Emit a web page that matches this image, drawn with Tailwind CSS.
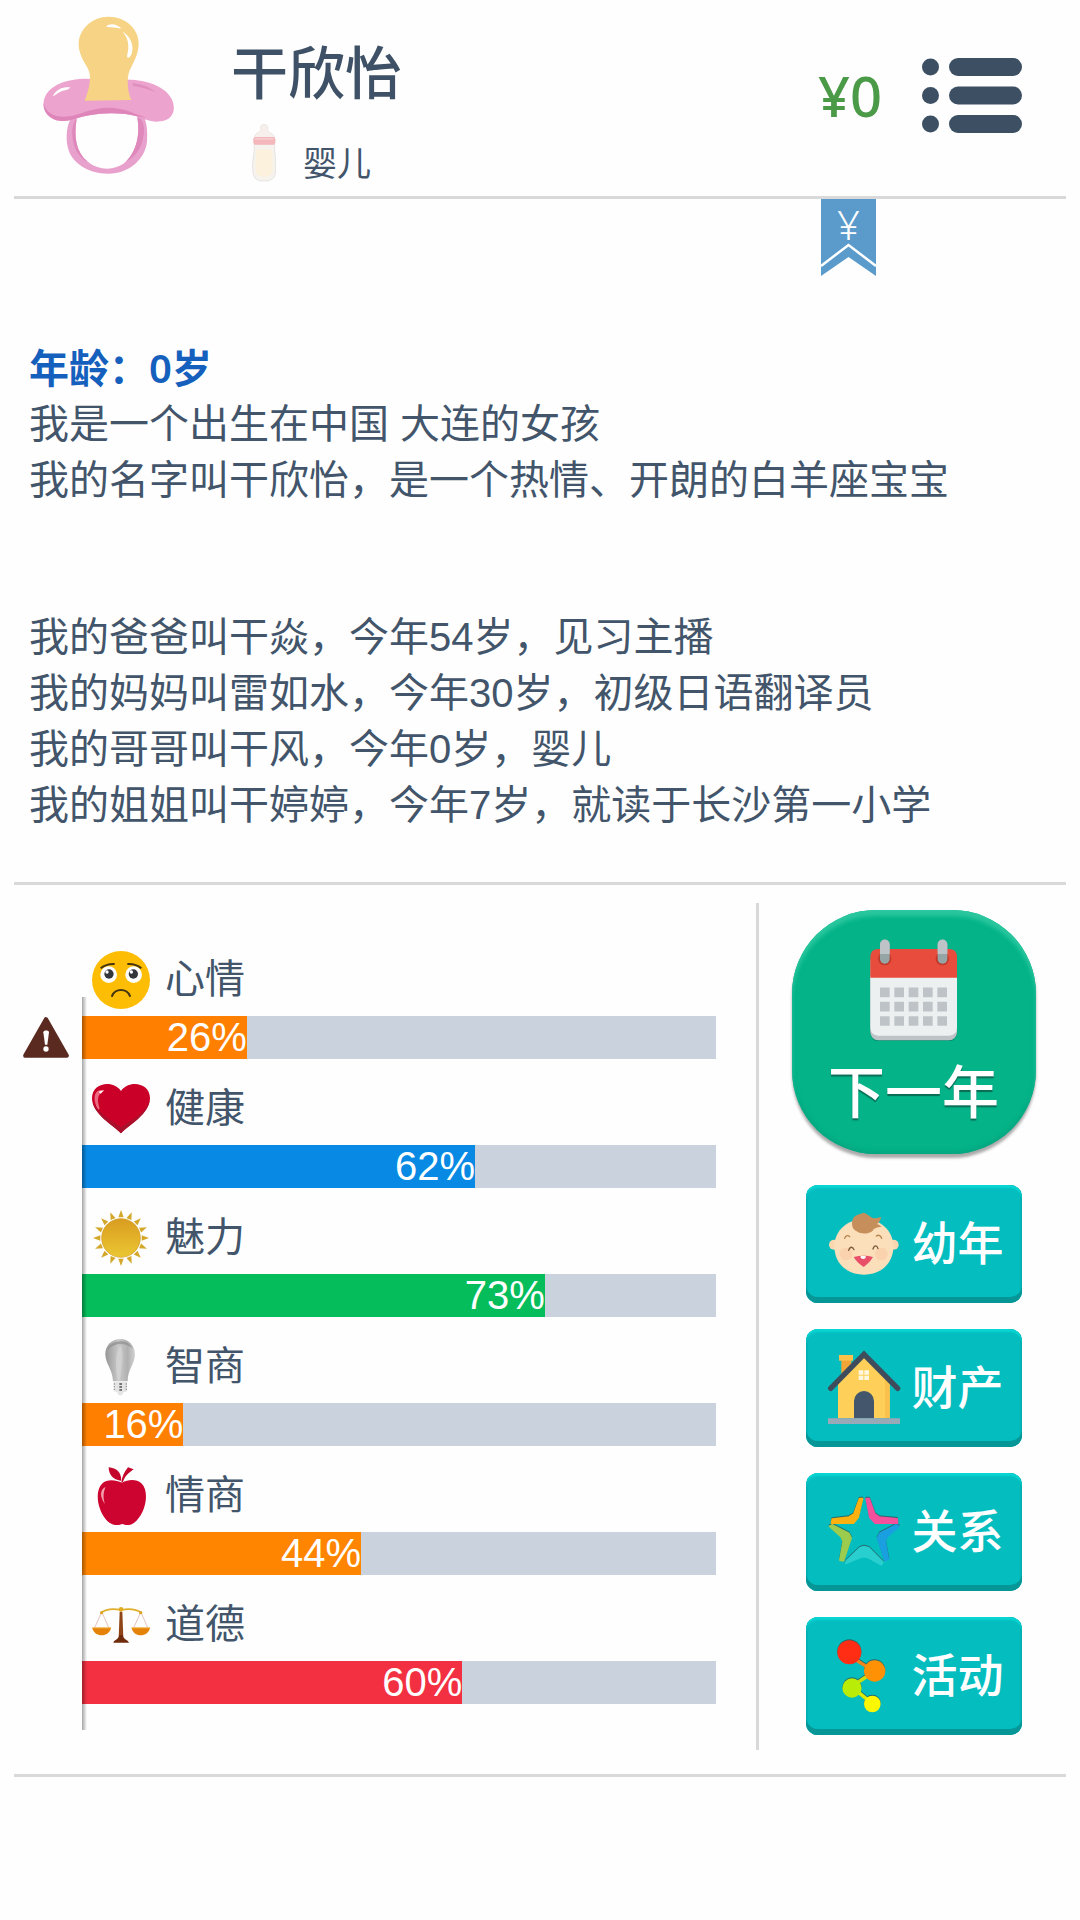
<!DOCTYPE html>
<html lang="zh-CN">
<head>
  <meta charset="UTF-8" />
  <meta name="viewport" content="width=device-width, initial-scale=1.0" />
  <title>干欣怡</title>
  <script src="https://cdn.jsdelivr.net/npm/@tailwindcss/browser@4"></script>
</head>
<body class="bg-[#fefefe] min-h-screen text-[#42556b] font-['Liberation_Sans','Noto_Sans_CJK_SC',sans-serif]">

  <!-- Header -->
  <header class="mx-[14px] flex items-start border-b-3 border-[#d9d9d9] pt-4 pb-[14px] pl-[29px] pr-11">
    <svg class="w-[132px] h-[159px] shrink-0" viewBox="129 48 396 477">
      <path d="M216 350C200 372 197 410 203 440C212 486 262 521 325 521C390 521 436 474 441 425C443 395 441 372 432 350L412 352C419 398 413 446 384 478C355 514 296 515 262 484C228 456 221 410 230 356Z" fill="#e8a0cc"/>
      <path d="M230 356C221 410 228 456 262 484C240 476 214 440 217 392C218 376 222 364 230 356ZM412 352C421 402 411 452 378 485C410 470 434 432 432 385C431 370 424 354 412 352Z" fill="#de88bb"/>
      <path d="M131 308C134 268 178 239 252 236L395 239C452 242 499 264 515 297C529 327 521 359 482 364C440 370 424 346 376 342C334 338 300 340 268 346C232 352 210 366 180 362C148 359 128 334 131 308Z" fill="#eca3ce"/>
      <path d="M131 308C136 336 160 350 190 350C236 349 260 327 318 323C380 322 402 344 440 352C420 354 402 345 376 342C334 338 300 340 268 346C232 352 210 366 180 362C148 359 128 334 131 308Z" fill="#de86ba"/>
      <path d="M396 249C425 252 450 262 466 276C440 266 418 260 400 258Z" fill="#df8fbe"/>
      <path d="M326 50C274 50 236 90 236 132C236 162 252 185 264 206C274 226 272 256 254 302L394 300C382 275 380 236 388 214C398 190 416 166 416 130C416 86 376 50 326 50Z" fill="#f7d385"/>
      <path d="M318 80C330 68 352 72 364 86C350 82 334 82 318 80ZM368 95C390 108 402 132 396 158C394 166 389 172 384 173C380 172 381 166 383 158C388 134 384 114 368 95Z" fill="#fff"/>
      <path d="M158 289C170 266 190 260 211 262C205 272 192 270 180 276C170 281 166 286 158 289Z" fill="#fff"/>
    </svg>

    <div class="ml-14 pt-[22px]">
      <h1 class="text-[57px] leading-[72px] font-medium text-[#3f5166]">干欣怡</h1>
      <div class="mt-[14px] ml-[21px] flex items-end gap-[27px]">
        <svg class="w-6 h-[58px]" viewBox="755 373 73 174">
          <path d="M762 413C764 396 782 398 782 388C778 376 786 373 792 373C799 373 806 378 802 390C804 400 822 398 824 414Z" fill="#f6efec" stroke="#e6dfdc" stroke-width="2"/>
          <path d="M762 432H824C822 460 830 480 827 510C826 538 816 545 792 545C768 545 758 538 757 510C755 480 764 460 762 432Z" fill="#f6f3ef" stroke="#ddd8d3" stroke-width="2"/>
          <path d="M767 452C780 446 806 446 817 452C816 475 819 490 818 510C817 528 808 532 792 532C776 532 767 528 766 510C765 490 769 470 767 452Z" fill="#fcf1dc"/>
          <rect x="759" y="411" width="67" height="24" rx="7" fill="#f4b7bb"/>
          <path d="M764 417H820" stroke="#f9d3d4" stroke-width="4"/>
        </svg>
        <span class="text-[34px] leading-9">婴儿</span>
      </div>
    </div>

    <div class="ml-auto mt-[42px] flex items-center gap-10">
      <span class="font-['Noto_Sans',sans-serif] text-[56px] leading-[75px] font-medium text-[#4b9a48]">¥0</span>
      <button type="button" aria-label="菜单">
        <svg class="w-[100px] h-[75px]" viewBox="0 0 100 75" fill="#3d4f63">
          <circle cx="8.5" cy="9" r="8.5"/><rect x="27" y="0" width="73" height="18" rx="9"/>
          <circle cx="8.5" cy="37.5" r="8.5"/><rect x="27" y="28.5" width="73" height="18" rx="9"/>
          <circle cx="8.5" cy="66" r="8.5"/><rect x="27" y="57" width="73" height="18" rx="9"/>
        </svg>
      </button>
    </div>
  </header>

  <!-- Life log -->
  <main class="mx-[14px] border-b-3 border-[#d9d9d9] pb-[49px] text-[40px] leading-[56px]">
    <div class="flex justify-end pr-[190px]">
      <svg class="w-[55px] h-[77px] overflow-visible" viewBox="0 0 55 77">
        <path d="M0 0H55V77L27.5 58L0 77Z" fill="#5b9bcb"/>
        <path d="M0 67L27.5 46L55 67" fill="none" stroke="#fff" stroke-width="2.5"/>
        <text x="27.5" y="41" text-anchor="middle" font-family="Noto Sans" font-size="40" font-weight="300" fill="#fff">¥</text>
      </svg>
    </div>
    <div class="mt-16 pl-[15px]">
      <h2 class="font-['Noto_Sans','Noto_Sans_CJK_SC',sans-serif] font-semibold text-[#1560bd]">年龄：0岁</h2>
      <p>我是一个出生在中国 大连的女孩</p>
      <p>我的名字叫干欣怡，是一个热情、开朗的白羊座宝宝</p>
    </div>
    <div class="mt-[101px] pl-[15px]">
      <p>我的爸爸叫干焱，今年54岁，见习主播</p>
      <p>我的妈妈叫雷如水，今年30岁，初级日语翻译员</p>
      <p>我的哥哥叫干风，今年0岁，婴儿</p>
      <p>我的姐姐叫干婷婷，今年7岁，就读于长沙第一小学</p>
    </div>
  </main>

  <div class="mx-[14px] flex border-b-3 border-[#d9d9d9] pt-[18px] pb-6">
    <!-- Stats -->
    <section class="relative flex-1 pt-10 pr-10 text-[40px] leading-[43px]">
      <ul class="space-y-[13px]">
        <li>
          <div class="ml-[78px] flex h-[73px] items-center gap-[15px]">
            <svg class="size-[58px]" viewBox="276 58 174 174">
              <circle cx="363" cy="145" r="87" fill="#fdbd05"/>
              <circle cx="326" cy="129" r="25" fill="#fff"/><circle cx="401" cy="129" r="25" fill="#fff"/>
              <circle cx="327" cy="127" r="14" fill="#33373c"/><circle cx="400" cy="127" r="14" fill="#33373c"/>
              <circle cx="321" cy="121" r="5" fill="#fff"/><circle cx="394" cy="121" r="5" fill="#fff"/>
              <path d="M302 110C314 100 328 96 344 97M382 97C398 96 414 101 424 110" fill="none" stroke="#46350f" stroke-width="6"/>
              <path d="M336 193C346 169 380 169 390 193" fill="none" stroke="#46350f" stroke-width="6" stroke-linecap="round"/>
            </svg>
            <span>心情</span>
          </div>
          <div class="flex items-center">
            <svg class="mx-[9px] w-[46px] h-[41px] shrink-0" viewBox="69 257 138 123">
              <path d="M138 264L200 373H76Z" fill="#5a2a20" stroke="#5a2a20" stroke-width="13" stroke-linejoin="round"/>
              <path d="M130 303C130 296 147 296 147 303L142 340H135Z" fill="#fff"/><circle cx="138" cy="353" r="8" fill="#fff"/>
            </svg>
            <div class="ml-1 h-[43px] flex-1 bg-[#c9d2dd]"><div class="h-full bg-[#ff8000] text-right text-white" style="width: 26%">26%</div></div>
          </div>
        </li>
        <li>
          <div class="ml-[78px] flex h-[73px] items-center gap-[15px]">
            <svg class="size-[58px]" viewBox="276 447 174 174">
              <path d="M363 607C345 586 276 550 276 502C276 454 340 446 363 480C386 446 450 454 450 502C450 550 381 586 363 607Z" fill="#cb0029"/>
              <path d="M363 607C345 586 290 558 278 515C310 562 350 575 363 590C376 575 430 558 449 510C440 556 381 586 363 607Z" fill="#a8102c"/>
              <path d="M284 508C282 486 292 474 312 478C298 486 290 500 296 522C304 544 290 540 284 508Z" fill="#ec6a80"/>
              <path d="M296 482L312 478L302 488Z" fill="#fff"/>
            </svg>
            <span>健康</span>
          </div>
          <div class="ml-[68px] h-[43px] bg-[#c9d2dd]"><div class="h-full bg-[#088ae4] text-right text-white" style="width: 62%">62%</div></div>
        </li>
        <li>
          <div class="ml-[78px] flex h-[73px] items-center gap-[15px]">
            <svg class="size-[58px]" viewBox="-87 -87 174 174">
              <defs>
                <linearGradient id="sun" x1="0" y1="0" x2="0" y2="1"><stop offset="0" stop-color="#d99c20"/><stop offset="1" stop-color="#ebc733"/></linearGradient>
                <path id="ray" d="M0 -84L8 -62H-8Z" fill="#d3a82a"/>
              </defs>
              <circle r="58" fill="url(#sun)" stroke="#d3981f" stroke-width="2"/>
              <use href="#ray"/><use href="#ray" transform="rotate(22.5)"/><use href="#ray" transform="rotate(45)"/><use href="#ray" transform="rotate(67.5)"/>
              <use href="#ray" transform="rotate(90)"/><use href="#ray" transform="rotate(112.5)"/><use href="#ray" transform="rotate(135)"/><use href="#ray" transform="rotate(157.5)"/>
              <use href="#ray" transform="rotate(180)"/><use href="#ray" transform="rotate(202.5)"/><use href="#ray" transform="rotate(225)"/><use href="#ray" transform="rotate(247.5)"/>
              <use href="#ray" transform="rotate(270)"/><use href="#ray" transform="rotate(292.5)"/><use href="#ray" transform="rotate(315)"/><use href="#ray" transform="rotate(337.5)"/>
            </svg>
            <span>魅力</span>
          </div>
          <div class="ml-[68px] h-[43px] bg-[#c9d2dd]"><div class="h-full bg-[#05bd5b] text-right text-white" style="width: 73%">73%</div></div>
        </li>
        <li>
          <div class="ml-[78px] flex h-[73px] items-center gap-[15px]">
            <svg class="size-[58px]" viewBox="276 414 174 174">
              <defs>
                <linearGradient id="bulb"><stop offset="0" stop-color="#979797"/><stop offset=".45" stop-color="#c9c9c9"/><stop offset=".75" stop-color="#b0b0b0"/><stop offset="1" stop-color="#d2d2d2"/></linearGradient>
              </defs>
              <path d="M361 417C334 417 315 438 316 464C317 492 338 508 339 544H383C383 508 404 492 405 464C405 438 388 417 361 417Z" fill="url(#bulb)"/>
              <path d="M322 450C330 420 384 412 398 446C380 428 344 426 322 450Z" fill="#8f8f8f" opacity=".7"/>
              <path d="M352 540C346 500 344 460 362 436C374 460 366 500 360 540Z" fill="#dcdcdc" opacity=".5"/>
              <path d="M342 546H381V574L370 577C368 590 354 590 352 577L342 574Z" fill="#e4e4e4"/>
              <path d="M343 550V572M379 550V572" stroke="#999" stroke-width="4" stroke-dasharray="4 4"/>
              <path d="M362 549V574" stroke="#777" stroke-width="8" stroke-dasharray="6 3"/>
            </svg>
            <span>智商</span>
          </div>
          <div class="ml-[68px] h-[43px] bg-[#c9d2dd]"><div class="h-full bg-[#ff8000] text-right text-white" style="width: 16%">16%</div></div>
        </li>
        <li>
          <div class="ml-[78px] flex h-[73px] items-center gap-[15px]">
            <svg class="size-[58px]" viewBox="276 53 174 174">
              <path d="M366 100C385 90 410 89 424 102C448 124 438 180 416 206C402 226 386 232 367 224C348 232 330 226 316 208C292 176 284 126 306 103C322 88 348 92 366 100Z" fill="#cd0330"/>
              <path d="M362 94C340 92 326 76 326 54C350 56 364 68 364 94ZM364 100C366 80 374 66 384 54L401 60C384 72 374 82 369 98Z" fill="#c4052c"/>
              <path d="M317 113C300 120 298 142 315 164C309 146 309 130 317 113Z" fill="#f3a0ae"/>
            </svg>
            <span>情商</span>
          </div>
          <div class="ml-[68px] h-[43px] bg-[#c9d2dd]"><div class="h-full bg-[#ff8500] text-right text-white" style="width: 44%">44%</div></div>
        </li>
        <li>
          <div class="ml-[78px] flex h-[73px] items-center gap-[15px]">
            <svg class="size-[58px]" viewBox="276 441 174 174">
              <path d="M305 490L284 536M306 490L326 536M422 490L401 536M423 490L443 536" stroke="#d4a59a" stroke-width="2"/>
              <path d="M302 492C322 477 345 479 363 483C381 479 404 477 426 492" fill="none" stroke="#dfae2a" stroke-width="5"/>
              <circle cx="305" cy="491" r="5" fill="#dda52a"/><circle cx="422" cy="491" r="5" fill="#dda52a"/><circle cx="363" cy="481" r="7" fill="#e2ac22"/>
              <path d="M359 488H367L370 566H356Z" fill="#8f4518"/>
              <path d="M340 581C342 572 356 572 358 558H368C370 572 384 572 387 581Z" fill="#6f2c0c"/>
              <path d="M277 536H333C328 566 282 566 277 536ZM395 536H450C445 566 399 566 395 536Z" fill="#e58209"/>
              <path d="M277 537H333M395 537H450" stroke="#f0a72c" stroke-width="3"/>
            </svg>
            <span>道德</span>
          </div>
          <div class="ml-[68px] h-[43px] bg-[#c9d2dd]"><div class="h-full bg-[#f23041] text-right text-white" style="width: 60%">60%</div></div>
        </li>
      </ul>
      <!-- axis shadow over the bars -->
      <div class="absolute left-[68px] top-[94px] bottom-5 w-[5px] bg-linear-to-r from-black/35 to-transparent"></div>
    </section>

    <!-- Actions -->
    <nav class="flex w-[310px] flex-col items-center border-l-3 border-[#d9d9d9] pt-[7px] pb-[15px] pl-[2px]">
      <button type="button" class="flex size-[244px] flex-col items-center rounded-[84px] bg-[#04b388] pt-[29px] shadow-[0_4px_3px_#00000055,inset_0_6px_4px_#2bc79f,inset_0_-3px_4px_#04a680]">
        <svg class="w-[88px] h-[102px]" viewBox="392 175 264 306">
          <rect x="393" y="220" width="260" height="262" rx="24" fill="#0a8f70"/>
          <rect x="393" y="220" width="260" height="259" rx="24" fill="#bdc3c7"/>
          <path d="M393 285H653V440Q653 465 629 465H417Q393 465 393 440Z" fill="#ecf0f1"/>
          <path d="M393 291V230Q393 205 417 205H629Q653 205 653 230V291Z" fill="#e74c3c"/>
          <circle cx="436" cy="234" r="20" fill="#c0392b"/><circle cx="609" cy="234" r="20" fill="#c0392b"/>
          <rect x="422" y="177" width="29" height="72" rx="14" fill="#95a5a6"/><rect x="595" y="177" width="29" height="72" rx="14" fill="#95a5a6"/>
          <path d="M422 220V191A14 14 0 0 1 451 191V220ZM595 220V191A14 14 0 0 1 624 191V220Z" fill="#bdc3c7"/>
          <path d="M422 335H624M422 378H624M422 421H624" stroke="#bdc3c7" stroke-width="29" stroke-dasharray="29 14"/>
        </svg>
        <span class="mt-4 text-[57px] leading-[72px] font-medium text-white text-shadow-[0_2px_1px_#0a6b55]">下一年</span>
      </button>

      <div class="mt-[31px] flex flex-col gap-[26px] text-[46px] leading-[60px] font-medium text-white text-shadow-[0_-2px_1px_#0b5558]">
        <button type="button" class="flex h-[118px] w-[216px] items-center gap-3 rounded-xl bg-[#04bdbf] pl-[22px] shadow-[inset_0_-6px_0_#069698,inset_0_3px_2px_#08d6d3,inset_0_0_2px_1px_#079a9c]">
          <svg class="size-[72px] overflow-visible" viewBox="144 112 216 216">
            <circle cx="162" cy="222" r="15" fill="#f9d8b0"/><circle cx="341" cy="222" r="15" fill="#f9d8b0"/>
            <path d="M252 146C302 146 338 180 340 224C342 276 304 312 252 312C198 312 162 276 163 224C165 180 202 146 252 146Z" fill="#fbdfba"/>
            <circle cx="198" cy="250" r="19" fill="#fad2ae"/><circle cx="304" cy="250" r="19" fill="#fad2ae"/>
            <path d="M217 150C220 132 238 132 250 126C262 128 270 140 282 143C292 144 298 138 304 140C300 150 298 156 291 160C300 163 300 166 306 167C296 172 286 168 278 180C268 190 244 192 230 182C218 176 214 164 217 150Z" fill="#c58e5b"/>
            <path d="M194 203C198 193 204 193 209 198M289 196C296 191 303 195 305 203" fill="none" stroke="#b98351" stroke-width="4" stroke-linecap="round"/>
            <path d="M206 239C210 226 218 228 222 237M279 235C283 222 291 224 294 234" fill="none" stroke="#7d5a3c" stroke-width="4" stroke-linecap="round"/>
            <path d="M221 259C240 254 262 254 279 259C272 272 260 282 251 289C240 282 228 272 221 259Z" fill="#e8506a"/>
            <path d="M242 256H257V262Q250 268 242 262Z" fill="#fff"/>
          </svg>
          <span>幼年</span>
        </button>
        <button type="button" class="flex h-[118px] w-[216px] items-center gap-3 rounded-xl bg-[#04bdbf] pl-[22px] shadow-[inset_0_-6px_0_#069698,inset_0_3px_2px_#08d6d3,inset_0_0_2px_1px_#079a9c]">
          <svg class="size-[72px] overflow-visible" viewBox="144 543 216 216">
            <path d="M184 565H214V610H184Z" fill="#f0a536"/><path d="M177 552H219V569H177Z" fill="#fbc14b"/>
            <path d="M174 634L252 556L329 634V742H174Z" fill="#fed05a"/>
            <path d="M315 610L329 634V742H315Z" fill="#fbc14b"/>
            <path d="M152 652L252 550L353 652" fill="none" stroke="#3e4c5c" stroke-width="16" stroke-linecap="round"/>
            <path d="M236 598H250V611H236ZM253 598H267V611H253ZM236 614H250V627H236ZM253 614H267V627H253Z" fill="#fff8df"/>
            <path d="M222 742V690A30 30 0 0 1 282 690V742Z" fill="#43566b"/>
            <path d="M144 742H360V759H144Z" fill="#98a9b8"/>
          </svg>
          <span>财产</span>
        </button>
        <button type="button" class="flex h-[118px] w-[216px] items-center gap-3 rounded-xl bg-[#04bdbf] pl-[22px] shadow-[inset_0_-6px_0_#069698,inset_0_3px_2px_#08d6d3,inset_0_0_2px_1px_#079a9c]">
          <svg class="size-[72px] overflow-visible drop-shadow-[0_-1px_0_#24696c]" viewBox="144 120 216 216" stroke-width="6" stroke-linejoin="round">
            <path d="M239 128L247 128L234 184L220 201H155L157 190L206 184L222 174Z" fill="#fbb110" stroke="#fbb110"/>
            <path d="M259 128L267 128L284 174L298 184L351 189L352 201H286L270 184Z" fill="#f4509c" stroke="#f4509c"/>
            <path d="M149 211L156 207L206 232L213 246L190 314L180 312L190 256L184 242Z" fill="#9ccc4e" stroke="#9ccc4e"/>
            <path d="M356 211L349 207L300 232L293 246L315 312L325 310L315 256L321 242Z" fill="#1a9fe0" stroke="#1a9fe0"/>
            <path d="M197 322L200 314L240 276L252 272L266 276L308 318L304 326L260 302L246 302Z" fill="#29cfcf" stroke="#29cfcf"/>
          </svg>
          <span>关系</span>
        </button>
        <button type="button" class="flex h-[118px] w-[216px] items-center gap-3 rounded-xl bg-[#04bdbf] pl-[22px] shadow-[inset_0_-6px_0_#069698,inset_0_3px_2px_#08d6d3,inset_0_0_2px_1px_#079a9c]">
          <svg class="size-[72px] overflow-visible drop-shadow-[0_-1px_0_#24696c]" viewBox="144 552 216 216">
            <path d="M228 612L264 634" stroke="#f0861a" stroke-width="10"/>
            <path d="M226 684L268 656" stroke="#c9dd10" stroke-width="11"/>
            <path d="M232 706L266 734" stroke="#d8ec08" stroke-width="11"/>
            <circle cx="208" cy="589" r="36" fill="#fe2d14"/>
            <circle cx="284" cy="645" r="32" fill="#ff9105"/>
            <circle cx="216" cy="696" r="29" fill="#b9ec06"/>
            <circle cx="277" cy="744" r="25" fill="#fcf804"/>
          </svg>
          <span>活动</span>
        </button>
      </div>
    </nav>
  </div>

</body>
</html>
